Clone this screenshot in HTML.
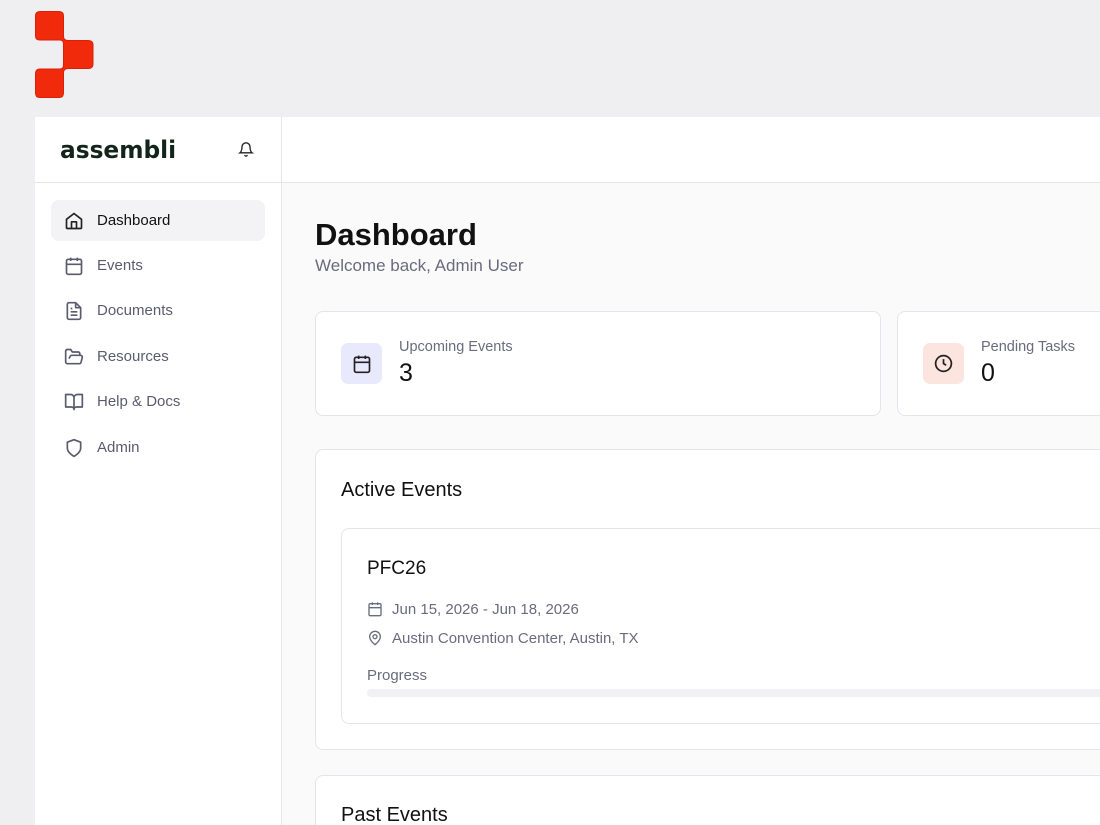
<!DOCTYPE html>
<html><head><style>
*{box-sizing:border-box;margin:0;padding:0}
html,body{width:1100px;height:825px;overflow:hidden}
body{background:#efeef1;font-family:"Liberation Sans",sans-serif;position:relative}
.side{position:absolute;left:35px;top:117px;width:247px;height:708px;background:#fff;border-right:1px solid #e6e6ea}
.top{position:absolute;left:282px;top:117px;width:818px;height:66px;background:#fff;border-bottom:1px solid #e6e6ea}
.sidetop{height:66px;border-bottom:1px solid #e6e6ea;position:relative}
.main{position:absolute;left:282px;top:183px;width:818px;height:642px;background:#fafafb;overflow:hidden}
.nav{position:absolute;left:16px;width:214px;height:41px;border-radius:8px;display:flex;align-items:center;padding-left:13px;font-size:15px;color:#5b5b6e}
.nav svg{margin-right:13px}
.nav.act{background:#f3f3f6;color:#111}
.card{position:absolute;background:#fff;border:1px solid #e4e4ea;border-radius:8px}
.ic{position:absolute;width:41px;height:41px;border-radius:7px;display:flex;align-items:center;justify-content:center}
.lbl{position:absolute;font-size:14.5px;color:#6b6b7e}
.num{position:absolute;font-size:25px;color:#111}
</style></head><body>
<svg style="position:absolute;left:0;top:0" width="100" height="100" viewBox="0 0 100 100">
<path d="M40 11.5H59Q63.5 11.5 63.5 16V36Q63.5 40.5 68 40.5H88Q93 40.5 93 45V64Q93 68.5 88 68.5H68Q63.5 68.5 63.5 73V93Q63.5 97.5 59 97.5H40Q35.5 97.5 35.5 93V74Q35.5 69 40 69H60Q63.5 69 63.5 65V44Q63.5 40 60 40H40Q35.5 40 35.5 36V16Q35.5 11.5 40 11.5Z" fill="#f12a0b" stroke="#d92008" stroke-width="1" stroke-linejoin="round"/>
</svg>
<div class="side">
 <div class="sidetop">
  <div style="position:absolute;left:25px;top:19px;font-size:24px;font-weight:900;color:#13241a;font-family:'DejaVu Sans',sans-serif;transform:scaleX(0.97);transform-origin:left">assembli</div>
  <svg style="position:absolute;left:203px;top:24px" width="16" height="17" viewBox="0 0 24 24" fill="none" stroke="#222" stroke-width="2" stroke-linecap="round"><path d="M6 8a6 6 0 0 1 12 0c0 7 3 9 3 9H3s3-2 3-9"/><path d="M10.3 21a1.9 1.9 0 0 0 3.4 0"/></svg>
 </div>
 <div class="nav act" style="top:83px"><svg width="20" height="20" viewBox="0 0 24 24" fill="none" stroke="#222" stroke-width="2" stroke-linejoin="round"><path d="M3 10l9-7 9 7v10a1 1 0 0 1-1 1H4a1 1 0 0 1-1-1z"/><path d="M9 21v-8h6v8"/></svg>Dashboard</div>
 <div class="nav" style="top:128px"><svg width="20" height="20" viewBox="0 0 24 24" fill="none" stroke="#5b5b6e" stroke-width="2"><rect x="3" y="4" width="18" height="18" rx="2"/><path d="M16 2v4M8 2v4M3 10h18"/></svg>Events</div>
 <div class="nav" style="top:173px"><svg width="20" height="20" viewBox="0 0 24 24" fill="none" stroke="#5b5b6e" stroke-width="2" stroke-linejoin="round"><path d="M14 2H6a2 2 0 0 0-2 2v16a2 2 0 0 0 2 2h12a2 2 0 0 0 2-2V8z"/><path d="M14 2v6h6M16 13H8M16 17H8M10 9H8"/></svg>Documents</div>
 <div class="nav" style="top:219px"><svg width="20" height="20" viewBox="0 0 24 24" fill="none" stroke="#5b5b6e" stroke-width="2" stroke-linejoin="round"><path d="M6 14l1.5-3a2 2 0 0 1 1.8-1H20a2 2 0 0 1 1.9 2.5l-1.5 6A2 2 0 0 1 18.5 20H4a2 2 0 0 1-2-2V5a2 2 0 0 1 2-2h4l2 3h7a2 2 0 0 1 2 2v2"/></svg>Resources</div>
 <div class="nav" style="top:264px"><svg width="20" height="20" viewBox="0 0 24 24" fill="none" stroke="#5b5b6e" stroke-width="2" stroke-linejoin="round"><path d="M2 3h6a4 4 0 0 1 4 4v14a3 3 0 0 0-3-3H2zM22 3h-6a4 4 0 0 0-4 4v14a3 3 0 0 1 3-3h7z"/></svg>Help &amp; Docs</div>
 <div class="nav" style="top:310px"><svg width="20" height="20" viewBox="0 0 24 24" fill="none" stroke="#5b5b6e" stroke-width="2" stroke-linejoin="round"><path d="M12 22s8-4 8-10V5l-8-3-8 3v7c0 6 8 10 8 10z"/></svg>Admin</div>
</div>
<div class="top"></div>
<div class="main">
 <div style="position:absolute;left:33px;top:34px;font-size:31px;font-weight:bold;color:#111">Dashboard</div>
 <div style="position:absolute;left:33px;top:73px;font-size:17px;color:#6b6b7e">Welcome back, Admin User</div>
 <div class="card" style="left:33px;top:128px;width:566px;height:105px">
  <div class="ic" style="left:25px;top:31px;background:#e9e9fd"><svg width="20" height="20" viewBox="0 0 24 24" fill="none" stroke="#222" stroke-width="2"><rect x="3" y="4" width="18" height="18" rx="2"/><path d="M16 2v4M8 2v4M3 10h18"/></svg></div>
  <div class="lbl" style="left:83px;top:27px">Upcoming Events</div>
  <div class="num" style="left:83px;top:47px">3</div>
 </div>
 <div class="card" style="left:615px;top:128px;width:240px;height:105px">
  <div class="ic" style="left:25px;top:31px;background:#fde5df"><svg width="21" height="21" viewBox="0 0 24 24" fill="none" stroke="#222" stroke-width="2"><circle cx="12" cy="12" r="9"/><path d="M12 7v5l3 2"/></svg></div>
  <div class="lbl" style="left:83px;top:27px">Pending Tasks</div>
  <div class="num" style="left:83px;top:47px">0</div>
 </div>
 <div class="card" style="left:33px;top:266px;width:830px;height:301px">
  <div style="position:absolute;left:25px;top:29px;font-size:20px;color:#111">Active Events</div>
  <div class="card" style="left:25px;top:78px;width:800px;height:196px">
   <div style="position:absolute;left:25px;top:29px;font-size:19px;color:#111">PFC26</div>
   <svg style="position:absolute;left:25px;top:72px" width="16" height="16" viewBox="0 0 24 24" fill="none" stroke="#6b6b7e" stroke-width="2"><rect x="3" y="4" width="18" height="18" rx="2"/><path d="M16 2v4M8 2v4M3 10h18"/></svg>
   <div style="position:absolute;left:50px;top:72px;font-size:15px;color:#6b6b7e">Jun 15, 2026 - Jun 18, 2026</div>
   <svg style="position:absolute;left:25px;top:101px" width="16" height="16" viewBox="0 0 24 24" fill="none" stroke="#6b6b7e" stroke-width="2"><path d="M20 10c0 6-8 12-8 12s-8-6-8-12a8 8 0 0 1 16 0z"/><circle cx="12" cy="10" r="3"/></svg>
   <div style="position:absolute;left:50px;top:101px;font-size:15px;color:#6b6b7e">Austin Convention Center, Austin, TX</div>
   <div style="position:absolute;left:25px;top:138px;font-size:15px;color:#6b6b7e">Progress</div>
   <div style="position:absolute;left:25px;top:160px;width:780px;height:8px;border-radius:4px;background:#f1f1f5"></div>
  </div>
 </div>
 <div class="card" style="left:33px;top:592px;width:830px;height:100px">
  <div style="position:absolute;left:25px;top:28px;font-size:20px;color:#111">Past Events</div>
 </div>
</div>
</body></html>
